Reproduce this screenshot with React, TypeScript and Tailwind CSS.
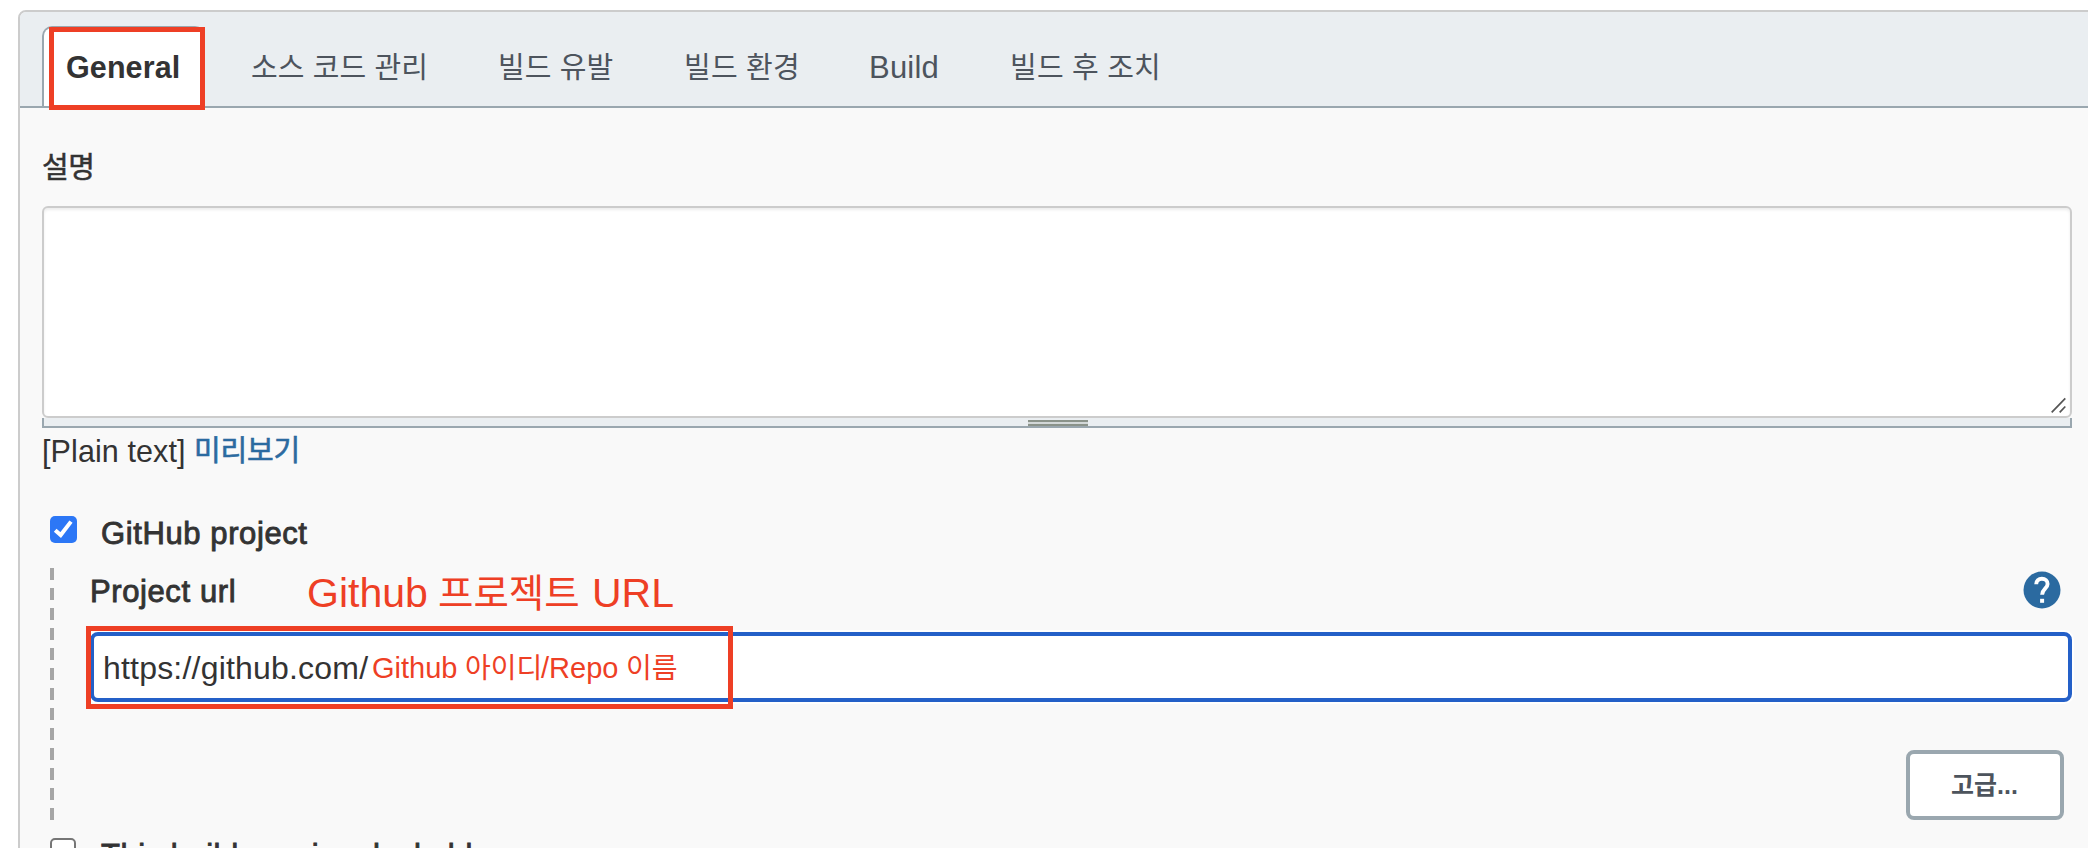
import type { ReactNode } from "react";

const tabs = [
  { label: "소스 코드 관리", className: "w-[247px] text-[29px] tracking-[0.1px]" },
  { label: "빌드 유발", className: "w-[186px] text-[29px] tracking-[0.1px]" },
  { label: "빌드 환경", className: "w-[185px] text-[29px] tracking-[0.2px]" },
  { label: "Build", className: "w-[141px] text-[31px] tracking-[0.2px]" },
  { label: "빌드 후 조치", className: "w-[200px] text-[29px] tracking-[0.2px]" },
];

function TabBar() {
  return (
    <div className="relative flex h-24 border-b-2 border-[#9aa7af] bg-[#eaeef1] pl-[22px]">
      <button className="relative mt-[14px] h-20 w-[163px] rounded-tl-[10px] rounded-tr-[10px] border-2 border-b-0 border-[#9aa7af] bg-white pl-[22px] text-left text-[30.5px] leading-9 font-bold tracking-[0.1px] text-[#333]">
        General
      </button>
      <div className="ml-[46px] flex pt-[38px] leading-9 whitespace-nowrap text-[#4d545d]">
        {tabs.map((tab) => (
          <span key={tab.label} className={tab.className}>
            {tab.label}
          </span>
        ))}
      </div>
      <div className="absolute top-[15px] left-[29px] h-[83px] w-[156px] border-5 border-[#ee3f25]" />
    </div>
  );
}

function MediumText({ children, className }: { children: ReactNode; className: string }) {
  return (
    <span
      className={`block text-[31px] leading-9 whitespace-nowrap [-webkit-text-stroke:0.9px_#333] ${className}`}
    >
      {children}
    </span>
  );
}

function Description() {
  return (
    <section className="w-[2030px]">
      <div className="pt-[42px] text-[29px] leading-9 tracking-[-0.5px] [-webkit-text-stroke:0.5px_#333]">설명</div>
      <div className="relative mt-[20px] h-[212px]">
        <textarea className="block h-full w-full resize-none rounded-md border-2 border-[#ccc] bg-white shadow-[inset_0_2px_3px_rgba(0,0,0,0.075)] outline-none" />
        <svg className="absolute right-1.5 bottom-[5px]" width="15" height="16" viewBox="0 0 15 16">
          <path d="M0.7 15.3 14.3 1.3M8.7 15.3 14.3 9.5" stroke="#555" strokeWidth="1.7" fill="none" />
        </svg>
      </div>
      <div className="flex h-[10px] justify-center border-x-2 border-b-2 border-[#9aa7af] bg-[#eaeef1] pt-0.5 pl-[2px]">
        <div className="h-1.5 w-[60px] border-y-2 border-[#8b938a] bg-[#d3d8d8]" />
      </div>
      <div className="flex h-[42px] pt-[5px] text-[30.5px] leading-9 whitespace-nowrap">
        <span className="w-[152px] tracking-[0.1px]">[Plain text]</span>
        <a className="text-[29px] tracking-[-0.2px] text-[#2b6aa0] [-webkit-text-stroke:0.6px_#2b6aa0]">미리보기</a>
      </div>
    </section>
  );
}

function HelpIcon() {
  return (
    <svg width="38" height="38" viewBox="0 0 38 38">
      <circle cx="19" cy="19" r="18.5" fill="#2b6aa0" />
      <path
        d="M13.2 13.3c0-3.4 2.4-5.5 5.7-5.5s5.7 2.2 5.7 5.2c0 4.6-5.5 5-5.5 10.8"
        stroke="#fff"
        strokeWidth="3.9"
        fill="none"
      />
      <rect x="17.1" y="27.8" width="4" height="4" fill="#fff" />
    </svg>
  );
}

function GithubProject() {
  return (
    <section className="pl-2">
      <div className="flex h-9">
        <span className="mt-[1px] flex size-[27px] items-center justify-center rounded-[5px] bg-[#2c77f6]">
          <svg width="27" height="27" viewBox="0 0 27 27">
            <path d="M5.2 14.2 10.7 19 21 5.6" stroke="#fff" strokeWidth="4" fill="none" />
          </svg>
        </span>
        <MediumText className="ml-[24px] pt-[1px] tracking-[0.6px]">GitHub project</MediumText>
      </div>
      <div className="mt-[17px] flex h-[252px]">
        <div className="w-1 bg-[repeating-linear-gradient(to_bottom,#a6a6a6_0px,#a6a6a6_12px,transparent_12px,transparent_20px)]" />
        <div className="ml-9 w-[1982px]">
          <div className="flex h-16">
            <MediumText className="w-[217px] pt-[6px] tracking-[0.6px]">Project url</MediumText>
            <div className="flex-1 text-[41px] leading-[46px] whitespace-nowrap text-[#ee3f25]">
              <span className="inline-block w-[131px] translate-y-[2px]">Github</span>
              <span className="inline-block w-[154px] translate-y-[2px] text-[38.5px]">프로젝트</span>
              <span className="inline-block translate-y-[2px]">URL</span>
            </div>
            <div className="mt-[3px] mr-[11px]">
              <HelpIcon />
            </div>
          </div>
          <div className="relative flex h-[70px] items-center rounded-lg border-4 border-[#2460c8] bg-white pl-[9px] whitespace-nowrap shadow-[0_0_0_2px_#fff]">
            <span className="w-[269px] translate-y-[1px] text-[32px] leading-9 tracking-[0.2px]">https://github.com/</span>
            <span className="translate-y-[1px] text-[29px] leading-9 text-[#ee3f25]">
              <span className="inline-block w-[93px]">Github</span>
              <span className="inline-block w-[76px] text-[28px]">아이디</span>
              <span className="inline-block w-[85px]">/Repo</span>
              <span className="inline-block text-[28px]">이름</span>
            </span>
            <div className="absolute -top-[10px] -left-2 h-[83px] w-[647px] border-5 border-[#ee3f25]" />
          </div>
          <div className="flex justify-end pt-12 pr-2">
            <button className="h-[70px] w-[158px] rounded-lg border-4 border-[#9aa7af] bg-white pt-[2px] pr-[1px] text-[25px] font-bold text-[#4d545d]">
              고급...
            </button>
          </div>
        </div>
      </div>
      <div className="mt-[18px] flex">
        <span className="size-[26px] rounded-[5px] border-2 border-[#767676] bg-white" />
        <MediumText className="ml-[25px] tracking-[0.5px]">This build requires lockable resources</MediumText>
      </div>
    </section>
  );
}

export default function App() {
  return (
    <div className="h-[848px] w-[2088px] overflow-hidden bg-white pt-[10px] pl-[18px] font-['Liberation_Sans','Noto_Sans_CJK_KR',sans-serif] text-[#333]">
      <div className="h-[900px] w-[2100px] overflow-hidden rounded-tl-lg border-2 border-[#ccc] bg-[#f9f9f9]">
        <TabBar />
        <div className="pl-[22px]">
          <Description />
          <div className="h-[45px]" />
          <GithubProject />
        </div>
      </div>
    </div>
  );
}
